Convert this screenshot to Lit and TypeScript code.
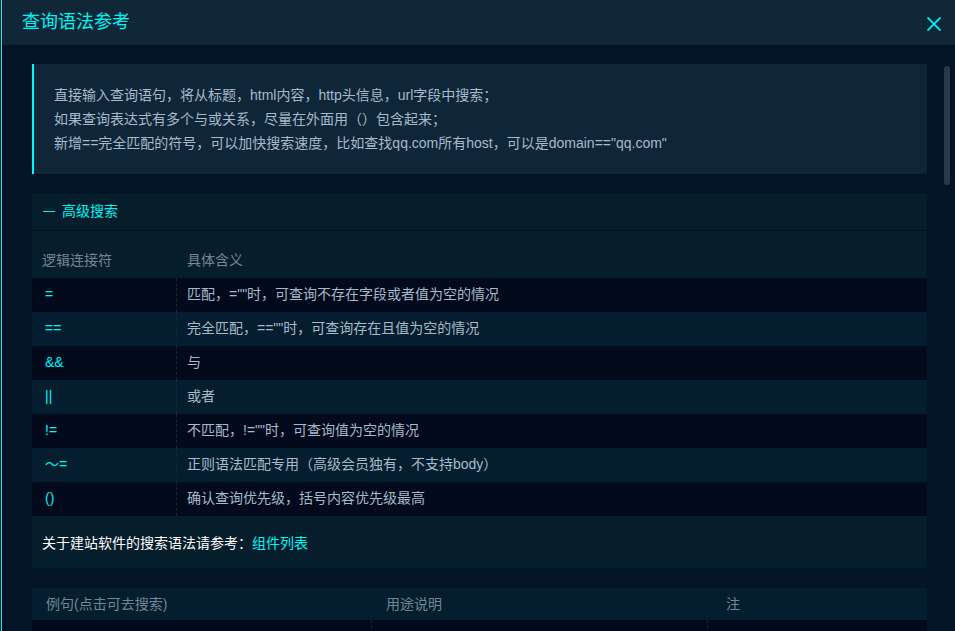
import { LitElement, html, css } from "lit";
import { customElement } from "lit/decorators.js";

const RULES: [string, string][] = [
  ["=", '匹配，=""时，可查询不存在字段或者值为空的情况'],
  ["==", '完全匹配，==""时，可查询存在且值为空的情况'],
  ["&&", "与"],
  ["||", "或者"],
  ["!=", '不匹配，!=""时，可查询值为空的情况'],
  ["～=", "正则语法匹配专用（高级会员独有，不支持body）"],
  ["()", "确认查询优先级，括号内容优先级最高"],
];

@customElement("app-root")
export class AppRoot extends LitElement {
  static styles = css`
    * {
      box-sizing: border-box;
    }
    :host {
      display: flex;
      flex-direction: column;
      height: 100vh;
      overflow: hidden;
      border-left: 1px solid #02101d;
      background: #021425;
      color: #a7bacb;
      font: 14px/24px "Liberation Sans", "Noto Sans CJK SC", sans-serif;
    }
    .dialog {
      display: flex;
      flex-direction: column;
      flex: 1;
      min-height: 0;
      border-left: 1px solid #00f6f6;
    }
    .head {
      display: flex;
      flex: none;
      align-items: center;
      justify-content: space-between;
      height: 45px;
      padding: 2px 14px 0 20px;
      background: #0f2737;
    }
    .title {
      margin: 0;
      font-size: 18px;
      font-weight: 400;
      line-height: 40px;
      align-self: flex-start;
      color: #00f6f6;
    }
    .close {
      display: flex;
      padding: 0;
      border: 0;
      background: none;
      color: #00f6f6;
      cursor: pointer;
    }
    .body {
      display: flex;
      flex: 1;
      min-height: 0;
      justify-content: space-between;
      padding: 19px 5px 0 30px;
    }
    .content {
      flex: 1;
      min-width: 0;
      overflow: hidden;
    }
    .track {
      flex: none;
      width: 6px;
      margin: 2px 0 0 17px;
    }
    .thumb {
      height: 119px;
      border-radius: 3px;
      background: #2b3848;
    }
    .tips {
      margin: 0 0 20px;
      padding: 19px 20px;
      border-left: 2px solid #00f6f6;
      background: #0f2638;
    }
    .tips p {
      margin: 0;
    }
    .section {
      margin-bottom: 20px;
      background: #061e2c;
    }
    .toggle {
      display: flex;
      align-items: center;
      gap: 7px;
      width: 100%;
      height: 37px;
      padding: 0 11px 2px;
      border: 0;
      border-bottom: 1px solid #03131f;
      background: none;
      color: #00f6f6;
      font: inherit;
      cursor: pointer;
    }
    table {
      width: 100%;
      border-collapse: separate;
      border-spacing: 0;
      table-layout: fixed;
      background: #051e2f;
    }
    th {
      height: 32px;
      padding: 0 10px;
      color: #748694;
      font-weight: 400;
      text-align: left;
    }
    td {
      height: 34px;
      padding: 0 10px 2px;
    }
    .rules {
      background: none;
    }
    .rules th {
      height: 47px;
      padding-top: 10px;
    }
    .rules tbody tr {
      background: #051e2f;
    }
    tbody tr:nth-child(odd),
    .rules tbody tr:nth-child(odd) {
      background: #020a1c;
    }
    td:not(:last-child) {
      border-right: 1px dashed #132736;
    }
    .op {
      width: 145px;
    }
    td.op {
      padding-left: 13px;
      color: #00f6f6;
    }
    .note {
      margin: 0;
      padding: 15px 10px 13px;
      color: #fff;
    }
    .note a {
      color: #00f6f6;
      text-decoration: none;
    }
    .examples th {
      padding-left: 14px;
    }
    .examples th:last-child {
      padding-left: 18px;
    }
    .sentence {
      width: 340px;
    }
    .usage {
      width: 336px;
    }
  `;

  render() {
    return html`
      <section class="dialog" role="dialog" aria-labelledby="title">
        <header class="head">
          <h1 class="title" id="title">查询语法参考</h1>
          <button class="close" aria-label="关闭">
            <svg width="14" height="14" viewBox="0 0 14 14" fill="none" stroke="currentColor" stroke-width="1.8">
              <path d="M.5.5l13 13M13.5.5l-13 13" />
            </svg>
          </button>
        </header>
        <div class="body">
          <main class="content">
            <div class="tips">
              <p>直接输入查询语句，将从标题，html内容，http头信息，url字段中搜索；</p>
              <p>如果查询表达式有多个与或关系，尽量在外面用（）包含起来；</p>
              <p>新增==完全匹配的符号，可以加快搜索速度，比如查找qq.com所有host，可以是domain=="qq.com"</p>
            </div>
            <div class="section">
              <button class="toggle" aria-expanded="true">
                <svg width="12" height="12" viewBox="0 0 12 12" stroke="currentColor">
                  <path d="M0 6.5h12" />
                </svg>
                高级搜索
              </button>
              <table class="rules">
                <thead>
                  <tr>
                    <th class="op">逻辑连接符</th>
                    <th>具体含义</th>
                  </tr>
                </thead>
                <tbody>
                  ${RULES.map(
                    ([op, text]) => html`<tr>
                      <td class="op">${op}</td>
                      <td>${text}</td>
                    </tr>`
                  )}
                </tbody>
              </table>
              <p class="note">关于建站软件的搜索语法请参考：<a href="#components">组件列表</a></p>
            </div>
            <table class="examples">
              <thead>
                <tr>
                  <th class="sentence">例句(点击可去搜索)</th>
                  <th class="usage">用途说明</th>
                  <th>注</th>
                </tr>
              </thead>
              <tbody>
                <tr>
                  <td></td>
                  <td></td>
                  <td></td>
                </tr>
              </tbody>
            </table>
          </main>
          <div class="track"><div class="thumb"></div></div>
        </div>
      </section>
    `;
  }
}
